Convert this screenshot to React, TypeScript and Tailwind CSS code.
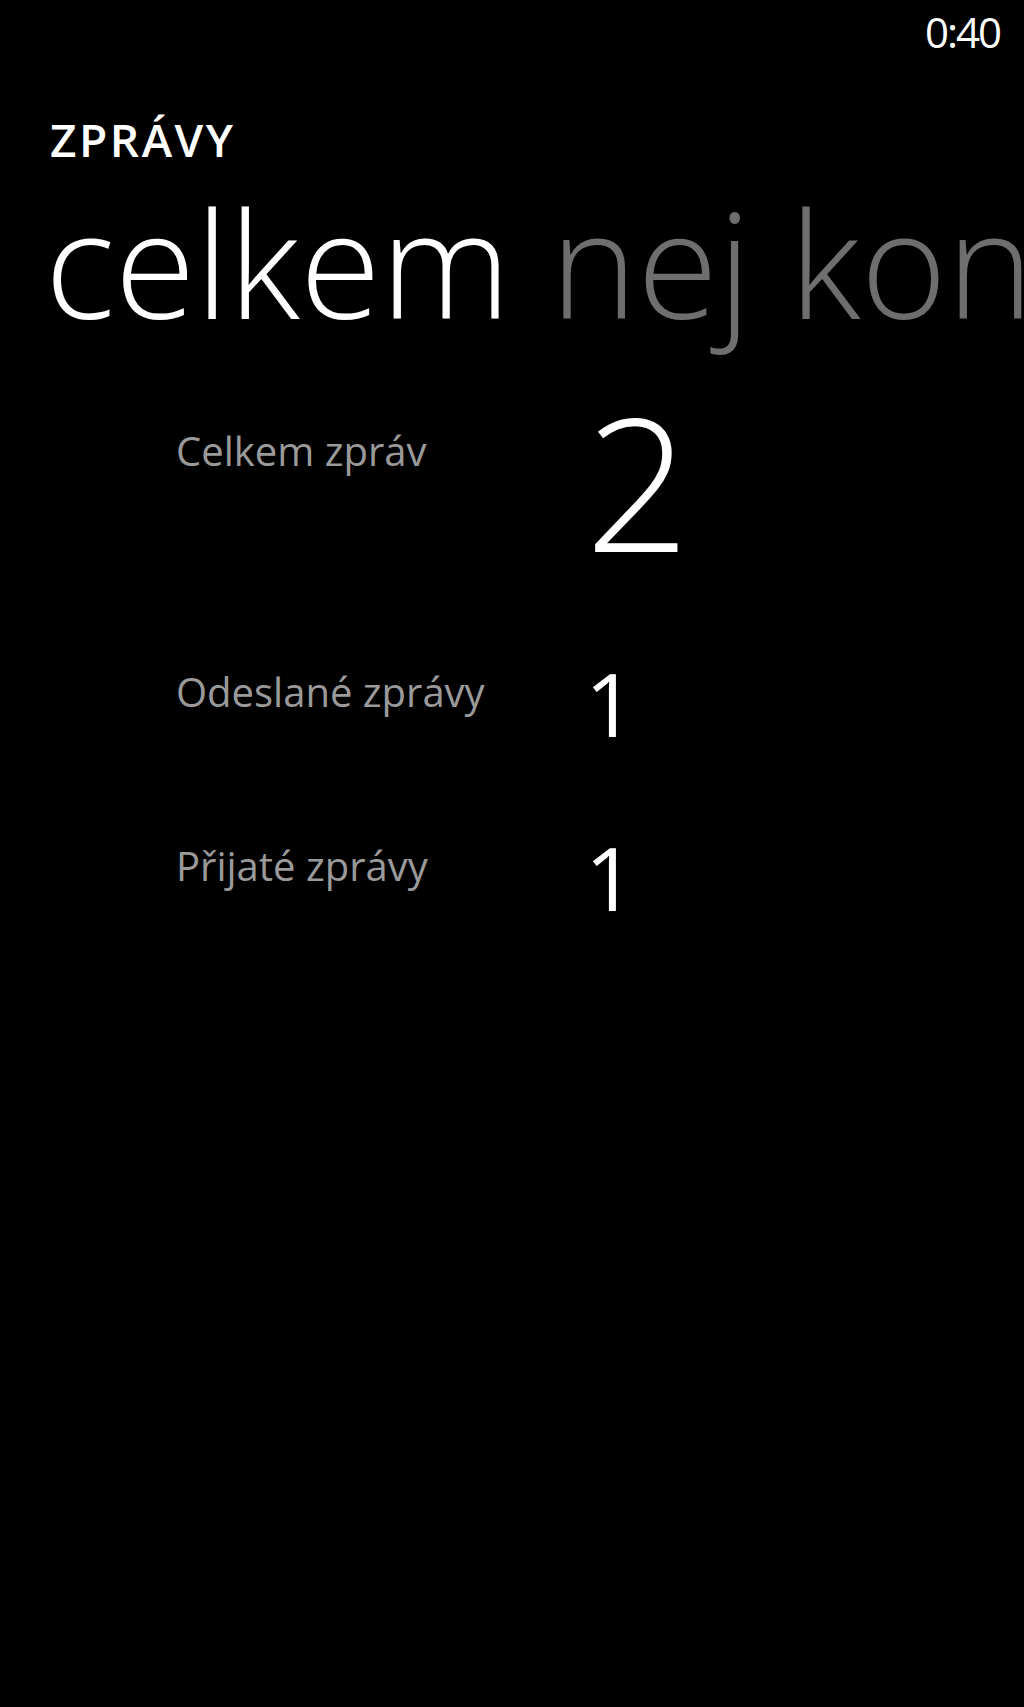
import * as React from 'react';

// Windows Phone style pivot page: message statistics

const stats = [
  { label: 'Celkem zpráv', value: '2', big: true },
  { label: 'Odeslané zprávy', value: '1', big: false },
  { label: 'Přijaté zprávy', value: '1', big: false },
];

const App: React.FC = () => {
  return (
    <div className="w-full h-[1707px] bg-black overflow-hidden font-['Open_Sans',sans-serif] text-white">
      {/* Status bar */}
      <div className="flex justify-end pt-[11px] pr-[24px]">
        <span className="text-[42px] leading-none tracking-[-2px]">0:40</span>
      </div>

      {/* App title */}
      <div className="mt-[59px] pl-[50px] text-[46px] leading-[1.2] font-semibold tracking-[2.5px]">
        ZPRÁVY
      </div>

      {/* Pivot headers */}
      <div className="mt-[15px] pl-[45px] flex gap-[40px] whitespace-nowrap text-[147px] leading-[1.1] font-light">
        <span>celkem</span>
        <span className="text-[#6e6e6e]">nej kontakty</span>
      </div>

      {/* Stats */}
      <div className="mt-[45px] pl-[176px] flex flex-col gap-[82px]">
        {stats.map((s, i) => (
          <div key={i} className="flex items-start">
            <div
              className={
                s.big
                  ? 'w-[409px] mt-[42px] text-[40px] leading-none text-[#9a9a9a]'
                  : 'w-[409px] mt-[17px] text-[40px] leading-none text-[#9a9a9a]'
              }
            >
              {s.label}
            </div>
            <div
              className={
                s.big ? 'text-[184px] leading-none font-light' : 'mt-[4px] text-[88px] leading-none font-normal'
              }
            >
              {s.value}
            </div>
          </div>
        ))}
      </div>
    </div>
  );
};

export default App;
